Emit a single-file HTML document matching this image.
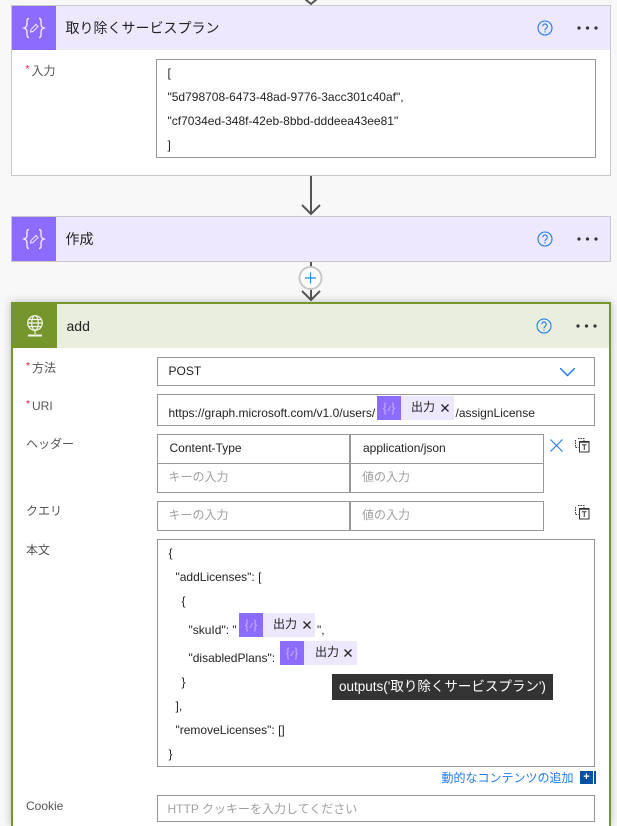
<!DOCTYPE html>
<html><head><meta charset="utf-8">
<style>
html,body{margin:0;padding:0;width:617px;height:826px;overflow:hidden}
body{position:relative;background:#f8f8f8;font-family:"Liberation Sans","Noto Sans CJK JP",sans-serif;color:#222}
div,span.a{position:absolute;box-sizing:border-box}
.t{white-space:nowrap;font-size:12px;line-height:16px;color:#222}
.l{white-space:nowrap;font-size:12px;line-height:16px;color:#555}
.h{white-space:nowrap;font-size:14px;line-height:20px;color:#222}
.s{position:absolute;left:-6px;top:-1px;color:#e8112d;font-size:10px}
.b{border:1px solid #989898;background:#fff}
.p{white-space:nowrap;font-size:12px;line-height:16px;color:#a0a0a0}
.ic{background:#8c6cff}
.tk{height:24px;background:#ede8fe}
.tk i{position:absolute;left:0;top:0;width:24px;height:24px;background:#8c6cff}
.tk b{position:absolute;left:34px;top:3px;font-weight:normal;font-size:12px;line-height:16px;color:#222;white-space:nowrap}
.tk svg{position:absolute}
svg{position:absolute;overflow:hidden}
</style></head><body>

<!-- arrows -->
<svg style="left:0;top:0" width="617" height="826" fill="none" stroke="#555" stroke-width="2">
<path d="M305 -1L311 4L317 -1"/>
<path d="M311 176V214M302 205L311 214L320 205"/>
<path d="M311 262V267M311 289V300M302 291L311 300L320 291"/>
</svg>

<!-- card 1 -->
<div style="left:11px;top:5px;width:600px;height:171px;background:#fff;border:1px solid #c8c8c8"></div>
<div style="left:12px;top:6px;width:598px;height:44px;background:#ede8fe"></div>
<div class="ic" style="left:12px;top:6px;width:44px;height:44px"></div>
<svg style="left:12px;top:6px" width="44" height="44" fill="none" stroke="#eee8ff" stroke-width="1.400"><path d="M17 12.500C15 12.500 15 14 15 16C15 19.500 15 21 12 22C15 23 15 24.500 15 28C15 30 15 31.500 17 31.500"/><path d="M27 12.500C29 12.500 29 14 29 16C29 19.500 29 21 32 22C29 23 29 24.500 29 28C29 30 29 31.500 27 31.500"/><path stroke-width="1" d="M18.500 26L19 23.500L24 18.500L26 20.500L21 25.500Z"/></svg>
<div class="h" style="left:65.500px;top:18px">取り除くサービスプラン</div>
<svg style="left:537px;top:20px" width="16" height="16" fill="none" stroke="#1f7cf0" stroke-width="1.100"><circle cx="8" cy="8" r="7"/><path d="M5.700 6.300A2.300 2.300 0 1 1 9.300 8.200C8.400 8.800 8 9.200 8 10.200M8 11.200V12.500"/></svg>
<svg style="left:577px;top:26px" width="22" height="4" fill="#333"><circle cx="2" cy="2" r="1.600"/><circle cx="10.500" cy="2" r="1.600"/><circle cx="19" cy="2" r="1.600"/></svg>
<div class="l" style="left:31.500px;top:63px"><span class="s">*</span>入力</div>
<div class="b" style="left:156px;top:59px;width:440px;height:99px"></div>
<div class="t" style="left:167.500px;top:65px">[</div>
<div class="t" style="left:167.500px;top:89px">"5d798708-6473-48ad-9776-3acc301c40af",</div>
<div class="t" style="left:167.500px;top:113px">"cf7034ed-348f-42eb-8bbd-dddeea43ee81"</div>
<div class="t" style="left:167.500px;top:137px">]</div>

<!-- card 2 -->
<div style="left:11px;top:216px;width:600px;height:46px;background:#ede8fe;border:1px solid #c8c8c8"></div>
<div class="ic" style="left:12px;top:217px;width:44px;height:44px"></div>
<svg style="left:12px;top:217px" width="44" height="44" fill="none" stroke="#eee8ff" stroke-width="1.400"><path d="M17 12.500C15 12.500 15 14 15 16C15 19.500 15 21 12 22C15 23 15 24.500 15 28C15 30 15 31.500 17 31.500"/><path d="M27 12.500C29 12.500 29 14 29 16C29 19.500 29 21 32 22C29 23 29 24.500 29 28C29 30 29 31.500 27 31.500"/><path stroke-width="1" d="M18.500 26L19 23.500L24 18.500L26 20.500L21 25.500Z"/></svg>
<div class="h" style="left:65.500px;top:229px">作成</div>
<svg style="left:537px;top:231px" width="16" height="16" fill="none" stroke="#1f7cf0" stroke-width="1.100"><circle cx="8" cy="8" r="7"/><path d="M5.700 6.300A2.300 2.300 0 1 1 9.300 8.200C8.400 8.800 8 9.200 8 10.200M8 11.200V12.500"/></svg>
<svg style="left:577px;top:237px" width="22" height="4" fill="#333"><circle cx="2" cy="2" r="1.600"/><circle cx="10.500" cy="2" r="1.600"/><circle cx="19" cy="2" r="1.600"/></svg>

<!-- plus -->
<svg style="left:298px;top:265px" width="26" height="26"><circle cx="12.500" cy="13" r="11" fill="#fff" stroke="#c8c8c8" stroke-width="2"/><path d="M12.500 7.500V18.500M7 13H18" stroke="#1f8ce8" stroke-width="1.200" fill="none"/></svg>

<!-- card 3 -->
<div style="left:11px;top:302px;width:600px;height:524px;background:#fff;border:2px solid #75962a;border-bottom:0;box-shadow:0 0 8px rgba(0,0,0,.25)"></div>
<div style="left:13px;top:304px;width:596px;height:44px;background:#e9eedf"></div>
<div style="left:13px;top:304px;width:44px;height:44px;background:#75962a"></div>
<svg style="left:13px;top:304px" width="44" height="44" fill="none" stroke="#f4f6ee" stroke-width="1.200"><circle cx="22" cy="19" r="7.300"/><ellipse cx="22" cy="19" rx="3.300" ry="7.300"/><path d="M14.700 19H29.300M15.700 15.500H28.300M15.700 22.500H28.300M22 26.500V30"/><path stroke-width="2" d="M15 31.500H29"/></svg>
<div class="h" style="left:66.500px;top:316px">add</div>
<svg style="left:536px;top:318px" width="16" height="16" fill="none" stroke="#1f7cf0" stroke-width="1.100"><circle cx="8" cy="8" r="7"/><path d="M5.700 6.300A2.300 2.300 0 1 1 9.300 8.200C8.400 8.800 8 9.200 8 10.200M8 11.200V12.500"/></svg>
<svg style="left:576px;top:324px" width="22" height="4" fill="#333"><circle cx="2" cy="2" r="1.600"/><circle cx="10.500" cy="2" r="1.600"/><circle cx="19" cy="2" r="1.600"/></svg>

<div class="l" style="left:32px;top:360px"><span class="s">*</span>方法</div>
<div class="b" style="left:157px;top:357px;width:438px;height:29px"></div>
<div class="t" style="left:168.500px;top:363px">POST</div>
<svg style="left:560px;top:368px" width="15" height="9" fill="none" stroke="#1f7cf0" stroke-width="1.500"><path d="M0 0L7.500 7.500L15 0"/></svg>

<div class="l" style="left:32px;top:398px"><span class="s">*</span>URI</div>
<div class="b" style="left:157px;top:394px;width:438px;height:32px"></div>
<div class="t" style="left:168.500px;top:405px">https://graph.microsoft.com/v1.0/users/</div>
<div class="tk" style="left:377px;top:396px;width:77px"><i></i><svg style="left:0;top:0" width="24" height="24" fill="none" stroke="#bba9ff" stroke-width="1.200"><path d="M9 7C7 7 8 10 8 11C8 12 7 12 6.500 12.500C7 13 8 13 8 14C8 15 7 18 9 18M15 7C17 7 16 10 16 11C16 12 17 12 17.500 12.500C17 13 16 13 16 14C16 15 17 18 15 18M11 15L13.500 10"/></svg><b>出力</b><svg style="left:64px;top:8px" width="8" height="8" stroke="#222" stroke-width="1.300"><path d="M0.500 0.500L7.500 7.500M7.500 0.500L0.500 7.500"/></svg></div>
<div class="t" style="left:455.500px;top:405px">/assignLicense</div>

<div class="l" style="left:26px;top:436px">ヘッダー</div>
<div class="b" style="left:157px;top:434px;width:193px;height:30px"></div>
<div class="b" style="left:350px;top:434px;width:194px;height:30px"></div>
<div class="b" style="left:157px;top:463px;width:193px;height:30px"></div>
<div class="b" style="left:350px;top:463px;width:194px;height:30px"></div>
<div class="t" style="left:169.500px;top:440px">Content-Type</div>
<div class="t" style="left:363px;top:440px">application/json</div>
<div class="p" style="left:168.500px;top:469px">キーの入力</div>
<div class="p" style="left:362px;top:469px">値の入力</div>
<svg style="left:550px;top:439px" width="13" height="13" fill="none" stroke="#1f7cf0" stroke-width="1.100"><path d="M0.500 0.500L12.500 12.500M12.500 0.500L0.500 12.500"/></svg>
<svg style="left:575px;top:438px" width="15" height="15" fill="none" stroke="#333"><path d="M3 0.500H9V3.500M0.500 2V9.500H3.500" stroke-dasharray="1.500 1"/><rect x="4.500" y="3.500" width="9.500" height="10.500" fill="#fff"/><path d="M4.500 4H14" stroke-width="1.500"/><path d="M7 6.800H11.500M9.250 6.800V12"/></svg>

<div class="l" style="left:26px;top:503px">クエリ</div>
<div class="b" style="left:157px;top:501px;width:193px;height:30px"></div>
<div class="b" style="left:350px;top:501px;width:194px;height:30px"></div>
<div class="p" style="left:168.500px;top:507px">キーの入力</div>
<div class="p" style="left:362px;top:507px">値の入力</div>
<svg style="left:575px;top:505px" width="15" height="15" fill="none" stroke="#333"><path d="M3 0.500H9V3.500M0.500 2V9.500H3.500" stroke-dasharray="1.500 1"/><rect x="4.500" y="3.500" width="9.500" height="10.500" fill="#fff"/><path d="M4.500 4H14" stroke-width="1.500"/><path d="M7 6.800H11.500M9.250 6.800V12"/></svg>

<div class="l" style="left:26px;top:542px">本文</div>
<div class="b" style="left:157px;top:539px;width:438px;height:228px"></div>
<div class="t" style="left:168.500px;top:545px">{</div>
<div class="t" style="left:175.500px;top:569px">"addLicenses": [</div>
<div class="t" style="left:181.500px;top:593px">{</div>
<div class="t" style="left:188.500px;top:622px">"skuId": "</div>
<div class="tk" style="left:239px;top:613px;width:76px"><i></i><svg style="left:0;top:0" width="24" height="24" fill="none" stroke="#bba9ff" stroke-width="1.200"><path d="M9 7C7 7 8 10 8 11C8 12 7 12 6.500 12.500C7 13 8 13 8 14C8 15 7 18 9 18M15 7C17 7 16 10 16 11C16 12 17 12 17.500 12.500C17 13 16 13 16 14C16 15 17 18 15 18M11 15L13.500 10"/></svg><b>出力</b><svg style="left:64px;top:8px" width="8" height="8" stroke="#222" stroke-width="1.300"><path d="M0.500 0.500L7.500 7.500M7.500 0.500L0.500 7.500"/></svg></div>
<div class="t" style="left:317px;top:622px">",</div>
<div class="t" style="left:188.500px;top:650px">"disabledPlans":</div>
<div class="tk" style="left:280px;top:641px;width:77px"><i></i><svg style="left:0;top:0" width="24" height="24" fill="none" stroke="#bba9ff" stroke-width="1.200"><path d="M9 7C7 7 8 10 8 11C8 12 7 12 6.500 12.500C7 13 8 13 8 14C8 15 7 18 9 18M15 7C17 7 16 10 16 11C16 12 17 12 17.500 12.500C17 13 16 13 16 14C16 15 17 18 15 18M11 15L13.500 10"/></svg><b style="left:35px">出力</b><svg style="left:64px;top:8px" width="8" height="8" stroke="#222" stroke-width="1.300"><path d="M0.500 0.500L7.500 7.500M7.500 0.500L0.500 7.500"/></svg></div>
<div class="t" style="left:181.500px;top:674px">}</div>
<div class="t" style="left:175.500px;top:698px">],</div>
<div class="t" style="left:175.500px;top:722px">"removeLicenses": []</div>
<div class="t" style="left:168.500px;top:746px">}</div>

<div style="left:332px;top:674px;width:221px;height:26px;background:#333;color:#fff;font-size:13.500px;line-height:26px;padding-left:7px;white-space:nowrap">outputs('取り除くサービスプラン')</div>

<div style="left:441.500px;top:769px;white-space:nowrap;font-size:12px;line-height:18px;color:#1f7cf0">動的なコンテンツの追加</div>
<div style="left:580px;top:771px;width:13px;height:13px;background:#0a50a0;color:#fff;font-size:11px;line-height:13px;text-align:center;font-weight:bold">+</div>
<div style="left:594px;top:771px;width:2px;height:13px;background:#0a50a0"></div>

<div class="l" style="left:26px;top:798px">Cookie</div>
<div class="b" style="left:157px;top:795px;width:438px;height:27px"></div>
<div class="p" style="left:167.500px;top:801px">HTTP クッキーを入力してください</div>

</body></html>
